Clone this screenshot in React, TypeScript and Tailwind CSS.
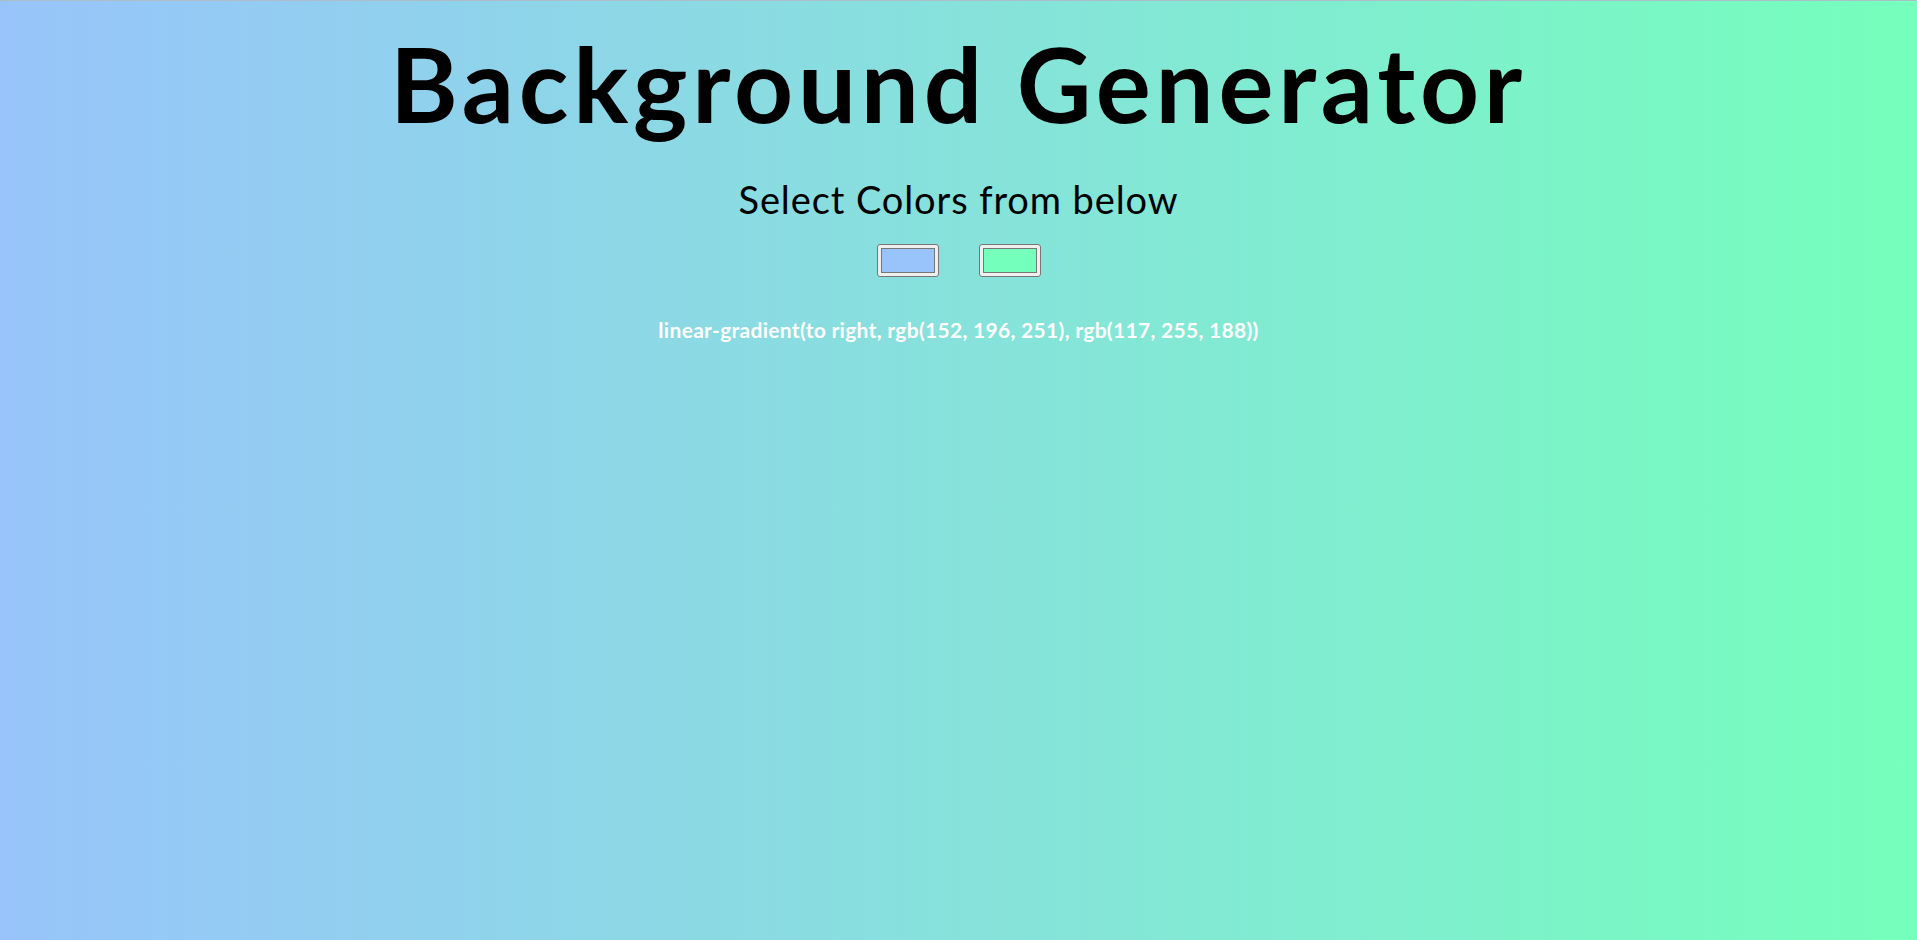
const FROM = 'rgb(152, 196, 251)';
const TO = 'rgb(117, 255, 188)';

function Swatch({ color }: { color: string }) {
  return (
    <div className="w-[62px] h-[33px] rounded-[3px] border border-[#767676] bg-[#efefef] p-[3px]">
      <div className="w-full h-full border border-[#777]" style={{ backgroundColor: color }} />
    </div>
  );
}

export default function App() {
  return (
    <div
      className="min-h-[940px] w-full border-t border-[#aebdca] text-center font-['Lato','Liberation_Sans',sans-serif]"
      style={{ background: `linear-gradient(to right, ${FROM}, ${TO})` }}
    >
      <h1 className="pt-[22px] text-[103px] leading-[120px] font-bold text-black tracking-[4.8px]">Background Generator</h1>
      <h3 className="mt-[34px] text-[38px] leading-[44px] text-black tracking-[0.9px]">Select Colors from below</h3>
      <div className="mt-[23px] flex justify-center gap-[40px]">
        <Swatch color={FROM} />
        <Swatch color={TO} />
      </div>
      <h3 className="mt-[40px] text-[21px] leading-[26px] font-bold text-white tracking-[0.3px]">
        linear-gradient(to right, {FROM}, {TO})
      </h3>
    </div>
  );
}
